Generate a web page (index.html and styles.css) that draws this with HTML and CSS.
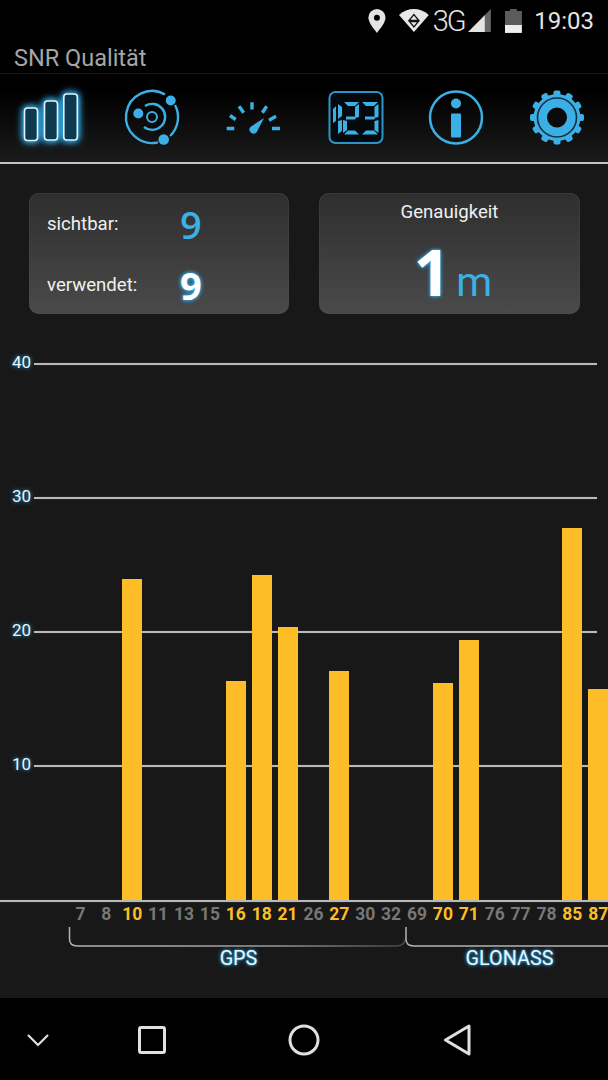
FILE: index.html
```html
<!DOCTYPE html>
<html lang="en">
<head>
    <meta charset="UTF-8">
    <meta name="viewport" content="width=device-width, initial-scale=1.0">
    <title>SNR Qualität</title>
    <link rel="stylesheet" href="styles.css">
</head>
<body>
    <div class="status-bar">
        <svg class="st-pin" width="18" height="24" viewBox="0 0 18 24"><path fill-rule="evenodd" fill="#e4e4e4" d="M9 0a8.600 8.600 0 0 1 8.600 8.600C17.600 14 12 20 9 24 6 20 .4 14 .4 8.600A8.600 8.600 0 0 1 9 0zm0 5.800a3 3 0 1 0 0 6 3 3 0 0 0 0-6z"/></svg>
        <svg class="st-wifi" width="30" height="23" viewBox="0 0 30 23"><path fill="#e8e8e8" d="M15 23 0 6Q7 0 15 0t15 6z"/><path fill="none" stroke="#111" stroke-width="1.300" d="M10 11.500h10L15 5.500zM10.500 12.500h9L15 18z"/></svg>
        <span class="st-net">3G</span>
        <svg class="st-signal" width="23" height="23" viewBox="0 0 23 23"><path fill="#666" d="M23 0v23H17V6z"/><path fill="#e4e4e4" d="M17 6v17H0z"/></svg>
        <svg class="st-battery" width="17" height="24" viewBox="0 0 17 24"><path fill="#5c5c5c" d="M5 0h7v2h5v14H0V2h5z"/><path fill="#eee" d="M0 16h17v8H0z"/></svg>
        <span class="st-time">19:03</span>
    </div>

    <div class="title-bar">SNR Qualität</div>

    <div class="tabs">
        <svg class="tab" width="70" height="64" viewBox="0 0 70 64">
            <g class="glow-icon">
                <rect x="8.500" y="23" width="13" height="32.500" rx="3"/>
                <rect x="28.500" y="16" width="13" height="39" rx="3"/>
                <rect x="47.800" y="9" width="13.500" height="46" rx="3"/>
            </g>
        </svg>
        <svg class="tab" width="70" height="64" viewBox="0 0 70 64">
            <g fill="none" stroke="#3cb0e6" stroke-width="2.400">
                <path d="M48 9.500A26 26 0 1 0 41 57.300"/>
                <path d="M58 20A26 26 0 0 1 53 51"/>
                <path d="M28 21A13 13 0 1 1 27 42"/>
                <circle cx="35" cy="32" r="5" stroke-width="2"/>
            </g>
            <g fill="#3cb0e6">
                <circle cx="53.700" cy="15.500" r="5"/>
                <circle cx="21.300" cy="28.500" r="5"/>
                <circle cx="46.700" cy="54.500" r="5.300"/>
            </g>
        </svg>
        <svg class="tab" width="70" height="64" viewBox="0 0 70 64">
            <path fill="none" stroke="#3cb0e6" stroke-width="3.400" d="M8.700 43.500h7.600M54 43.500h8M12 30.500l5.700 4M21 21.200l4.700 6.600M34 17.200v7.300M48.700 21.200l-4.400 6.600M58 31.200l-7 4"/>
            <path fill="#3cb0e6" d="M46 33 38.800 47a4 4 0 0 1-6.400-5z"/>
        </svg>
        <svg class="tab" width="70" height="64" viewBox="0 0 70 64">
            <rect x="9.500" y="7" width="53" height="51" rx="6" fill="#03090d" stroke="#2c96c8" stroke-width="2"/>
            <g fill="#3cb0e6">
                <path d="M13 24l3-3v15l-3 2zM18 19l4 3v9l-4 3zM18 36l4-1v11l-4 3z"/>
                <path d="M24 17h15l-4 4H28zM39 19v13l-4 1V22zM26 31.500h9l1 1.500-1 1.500h-9zM23 35l4 1v9l-4 3zM24 49.500l4-4h7l4 4z"/>
                <path d="M42 17h16l-4 4H46zM58.500 19v13l-4 1V22zM45 31.500h9l1 1.500-1 1.500h-9zM58.500 35v13l-4-3V36zM42 49.500l4-4h8l4 4z"/>
            </g>
        </svg>
        <svg class="tab" width="70" height="64" viewBox="0 0 70 64">
            <circle cx="35" cy="32.500" r="26" fill="none" stroke="#3cb0e6" stroke-width="2.500"/>
            <circle cx="35" cy="18.500" r="5" fill="#3cb0e6"/>
            <rect x="30" y="28.500" width="10" height="24" rx="1" fill="#3cb0e6"/>
        </svg>
        <svg class="tab" width="70" height="64" viewBox="0 0 70 64">
            <g fill="#3cb0e6">
                <rect x="31.500" y="5.500" width="7" height="54" rx="2"/>
                <rect x="31.500" y="5.500" width="7" height="54" rx="2" transform="rotate(30 35 32.500)"/>
                <rect x="31.500" y="5.500" width="7" height="54" rx="2" transform="rotate(60 35 32.500)"/>
                <rect x="31.500" y="5.500" width="7" height="54" rx="2" transform="rotate(90 35 32.500)"/>
                <rect x="31.500" y="5.500" width="7" height="54" rx="2" transform="rotate(120 35 32.500)"/>
                <rect x="31.500" y="5.500" width="7" height="54" rx="2" transform="rotate(150 35 32.500)"/>
                <circle cx="35" cy="32.500" r="23.500"/>
            </g>
            <circle cx="35" cy="32.500" r="19.500" fill="none" stroke="#12303f" stroke-width="1.600"/>
            <circle cx="35" cy="32.500" r="10" fill="#0b0b0b"/>
        </svg>
    </div>

    <div class="content">
        <div class="cards">
            <div class="card card-sats">
                <div class="sat-row">
                    <span class="sat-label">sichtbar:</span>
                    <span class="sat-num">9</span>
                </div>
                <div class="sat-row">
                    <span class="sat-label">verwendet:</span>
                    <span class="sat-num sat-num-used">9</span>
                </div>
            </div>
            <div class="card card-acc">
                <div class="acc-title">Genauigkeit</div>
                <div class="acc-value"><span class="acc-num">1</span><span class="acc-unit">m</span></div>
            </div>
        </div>

        <div class="plot">
            <div class="level"><span class="level-num">40</span><span class="level-line"></span></div>
            <div class="level"><span class="level-num">30</span><span class="level-line"></span></div>
            <div class="level"><span class="level-num">20</span><span class="level-line"></span></div>
            <div class="level"><span class="level-num">10</span><span class="level-line"></span></div>
            <div class="bars">
                <div class="slot"></div>
                <div class="slot"></div>
                <div class="slot"><div class="bar" style="height:321px"></div></div>
                <div class="slot"></div>
                <div class="slot"></div>
                <div class="slot"></div>
                <div class="slot"><div class="bar" style="height:219px"></div></div>
                <div class="slot"><div class="bar" style="height:325px"></div></div>
                <div class="slot"><div class="bar" style="height:273px"></div></div>
                <div class="slot"></div>
                <div class="slot"><div class="bar" style="height:229px"></div></div>
                <div class="slot"></div>
                <div class="slot"></div>
                <div class="slot"></div>
                <div class="slot"><div class="bar" style="height:217px"></div></div>
                <div class="slot"><div class="bar" style="height:260px"></div></div>
                <div class="slot"></div>
                <div class="slot"></div>
                <div class="slot"></div>
                <div class="slot"><div class="bar" style="height:372px"></div></div>
                <div class="slot"><div class="bar" style="height:211px"></div></div>
            </div>
        </div>
        <div class="baseline"></div>

        <div class="ticks">
            <span class="tick">7</span><span class="tick">8</span><span class="tick on">10</span>
            <span class="tick">11</span><span class="tick">13</span><span class="tick">15</span>
            <span class="tick on">16</span><span class="tick on">18</span><span class="tick on">21</span>
            <span class="tick">26</span><span class="tick on">27</span><span class="tick">30</span>
            <span class="tick">32</span><span class="tick">69</span><span class="tick on">70</span>
            <span class="tick on">71</span><span class="tick">76</span><span class="tick">77</span>
            <span class="tick">78</span><span class="tick on">85</span><span class="tick on">87</span>
        </div>

        <svg class="brackets" width="608" height="22" viewBox="0 0 608 22">
            <defs>
                <linearGradient id="gpsLine" x1="0" x2="1" y1="0" y2="0">
                    <stop offset="0" stop-color="#b4b4b4"/>
                    <stop offset=".6" stop-color="#9a9a9a"/>
                    <stop offset="1" stop-color="#444"/>
                </linearGradient>
            </defs>
            <path fill="none" stroke="url(#gpsLine)" stroke-width="1.500" d="M69.500 1v12q0 7 8 7H396q8 0 9.500-7"/>
            <path fill="none" stroke="#b4b4b4" stroke-width="1.500" d="M406 1v12q0 7 8 7H608"/>
        </svg>

        <div class="groups">
            <span class="group group-gps">GPS</span>
            <span class="group group-glonass">GLONASS</span>
        </div>
    </div>

    <div class="nav-bar">
        <svg class="nav-back" width="24" height="14" viewBox="0 0 24 14"><path d="M2 2l10 10L22 2" fill="none" stroke="#e0e0e0" stroke-width="2.200"/></svg>
        <svg class="nav-recent" width="28" height="28" viewBox="0 0 28 28"><rect x="1.500" y="1.500" width="25" height="25" rx="1.500" fill="none" stroke="#e0e0e0" stroke-width="3"/></svg>
        <svg class="nav-home" width="32" height="32" viewBox="0 0 32 32"><circle cx="16" cy="16" r="14" fill="none" stroke="#e0e0e0" stroke-width="3"/></svg>
        <svg class="nav-tri" width="28" height="32" viewBox="0 0 28 32"><path d="M2.500 16 26 2v28z" fill="none" stroke="#e0e0e0" stroke-width="3" stroke-linejoin="round"/></svg>
    </div>
</body>
</html>
```

FILE: styles.css
```css
* {
    box-sizing: border-box;
}
body {
    margin: 0;
    width: 608px;
    height: 1080px;
    overflow: hidden;
    background-color: #000;
    font-family: Roboto, "Liberation Sans", sans-serif;
    display: flex;
    flex-direction: column;
}

/* status bar */
.status-bar {
    height: 44px;
    flex: none;
    display: flex;
    align-items: center;
    padding: 0 14px 3px 368px;
    color: #e4e4e4;
}
.st-pin {
    margin-right: 13px;
}
.st-net {
    font-size: 29px;
    font-weight: 300;
    letter-spacing: -2px;
    margin-left: 4px;
    width: 36px;
}
.st-signal {
    margin-right: 14px;
}
.st-time {
    font-size: 24px;
    margin-left: 12px;
}

/* title */
.title-bar {
    height: 30px;
    flex: none;
    padding-left: 14px;
    font-size: 23.500px;
    line-height: 28px;
    color: #a6a6a6;
    border-bottom: 1px solid #191919;
}

/* tab icons */
.tabs {
    height: 90px;
    flex: none;
    display: flex;
    justify-content: space-between;
    align-items: center;
    padding: 0 16px 3px;
    background: linear-gradient(#000 20%, #1b1b1b);
    border-bottom: 2px solid #c4c4c4;
}
.tab {
    flex: none;
    overflow: visible;
}
.glow-icon {
    fill: #0e3a50;
    stroke: #dff4fc;
    stroke-width: 1.600;
    filter: drop-shadow(0 0 3px #2fa8e4) drop-shadow(0 0 3px #2fa8e4);
}

/* main area */
.content {
    height: 834px;
    flex: none;
    background-color: #181818;
    overflow: hidden;
}
.cards {
    display: flex;
    gap: 30px;
    padding: 29px 28px 0 29px;
    height: 200px;
}
.card {
    width: 260px;
    height: 121px;
    border-radius: 10px;
    background: linear-gradient(#2e2e2e, #4a4a4a);
    box-shadow: inset 0 0 2px #555;
    color: #f0f0f0;
}
.card-sats {
    padding: 0 18px;
}
.sat-row {
    height: 61px;
    display: flex;
    align-items: center;
}
.sat-label {
    font-size: 18.600px;
    width: 133px;
}
.sat-num {
    font-family: "Open Sans", sans-serif;
    font-size: 38px;
    font-weight: 600;
    color: #3cb0e6;
    line-height: 1;
}
.sat-num-used {
    font-weight: 700;
    color: #fff;
    text-shadow: 0 0 4px #2fa8e4, 0 0 4px #2fa8e4;
}
.card-acc {
    width: 261px;
    text-align: center;
    padding-top: 9px;
}
.acc-title {
    font-size: 18.600px;
    line-height: 21px;
}
.acc-value {
    margin: 13px 0 0 7px;
    height: 68px;
    display: flex;
    justify-content: center;
    align-items: baseline;
    gap: 6px;
}
.acc-num {
    font-family: "Open Sans", sans-serif;
    font-size: 64px;
    font-weight: 700;
    line-height: 72px;
    color: #fff;
    text-shadow: 0 0 4px #2fa8e4, 0 0 3px #2fa8e4;
}
.acc-unit {
    font-size: 41px;
    color: #3cb0e6;
}

/* chart */
.plot {
    position: relative;
    height: 536px;
}
.level {
    height: 134px;
    display: flex;
    align-items: flex-start;
    padding-left: 12px;
}
.level-num {
    width: 22px;
    font-size: 17px;
    line-height: 18px;
    margin-top: -11px;
    color: #e6f6fc;
    text-shadow: 0 0 4px #2fa8e4;
}
.level-line {
    width: 563px;
    height: 2px;
    margin-top: -1px;
    background-color: #b8b8b8;
    box-shadow: 0 0 1px #777;
}
.bars {
    position: absolute;
    left: 67.500px;
    bottom: 0;
    display: flex;
    align-items: flex-end;
    width: 545px;
}
.slot {
    flex: 0 0 25.900px;
    display: flex;
    justify-content: center;
}
.bar {
    width: 20px;
    background-color: #fdbd27;
    flex: none;
}
.baseline {
    height: 2px;
    background-color: #b8b8b8;
    box-shadow: 0 0 1px #777;
}
.ticks {
    display: flex;
    padding-left: 67.500px;
    height: 24px;
    width: 620px;
}
.tick {
    flex: 0 0 25.900px;
    text-align: center;
    font-size: 17.500px;
    font-weight: 700;
    line-height: 25px;
    color: #777;
}
.tick.on {
    color: #fdbd27;
}
.brackets {
    display: block;
}
.groups {
    display: flex;
    padding-left: 70px;
}
.group {
    flex: none;
    font-size: 19.800px;
    line-height: 22px;
    text-align: center;
    color: #e6f6fc;
    text-shadow: 0 0 4px #2fa8e4, 0 0 2px #2fa8e4;
}
.group-gps {
    width: 337px;
}
.group-glonass {
    width: 205px;
}

/* android nav */
.nav-bar {
    flex: 1;
    display: flex;
    align-items: center;
    padding: 2px 0 0 26px;
    background-color: #000;
}
.nav-recent {
    margin-left: 88px;
}
.nav-home {
    margin-left: 122px;
}
.nav-tri {
    margin-left: 123px;
}
```
